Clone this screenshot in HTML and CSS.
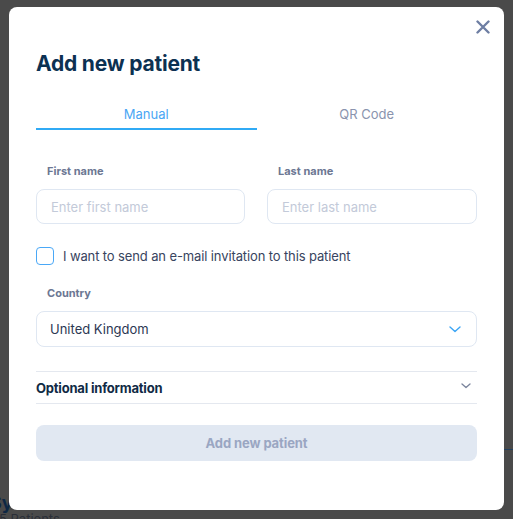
FILE: index.html
```html
<!DOCTYPE html>
<html lang="en">
<head>
<meta charset="utf-8">
<title>Add new patient</title>
<link rel="stylesheet" href="styles.css">
</head>
<body>
<div class="backdrop">
  <div class="bg-title">Sy</div>
  <div class="bg-sub">5 Patients</div>
  <div class="bg-line"></div>
</div>
<div class="modal">
  <button class="close" aria-label="Close">
    <svg width="14" height="14" viewBox="0 0 14 14"><path d="M1.5 1.5L12.5 12.5M12.5 1.5L1.5 12.5" stroke="#6e7ea3" stroke-width="2.4" stroke-linecap="round"/></svg>
  </button>
  <h1 class="title">Add new patient</h1>
  <div class="tabs">
    <div class="tab active">Manual</div>
    <div class="tab">QR Code</div>
  </div>
  <div class="row">
    <div class="field">
      <label class="label">First name</label>
      <div class="input placeholder">Enter first name</div>
    </div>
    <div class="field">
      <label class="label">Last name</label>
      <div class="input placeholder">Enter last name</div>
    </div>
  </div>
  <div class="check">
    <span class="box"></span>
    <span class="check-text">I want to send an e-mail invitation to this patient</span>
  </div>
  <div class="field country">
    <label class="label">Country</label>
    <div class="input select">
      <span>United Kingdom</span>
      <svg width="12" height="7" viewBox="0 0 12 7"><path d="M1 1L6 5.5L11 1" fill="none" stroke="#3ba5f5" stroke-width="1.4" stroke-linecap="round" stroke-linejoin="round"/></svg>
    </div>
  </div>
  <div class="optional">
    <span>Optional information</span>
    <svg width="10" height="6" viewBox="0 0 10 6"><path d="M1 1L5 4.6L9 1" fill="none" stroke="#7a849c" stroke-width="1.3" stroke-linecap="round" stroke-linejoin="round"/></svg>
  </div>
  <button class="submit">Add new patient</button>
</div>
</body>
</html>
```
FILE: styles.css
```css
* { box-sizing: border-box; }
html, body { margin: 0; padding: 0; }
body {
  background: #4a4a4a;
  font-family: Inter, "Noto Sans", sans-serif;
  width: 513px;
  height: 519px;
  overflow: hidden;
  position: relative;
}
.backdrop { position: absolute; inset: 0; }
.bg-title {
  position: absolute;
  left: -10px;
  top: 494px;
  font-size: 18px;
  line-height: 18px;
  font-weight: 700;
  color: #0d2744;
}
.bg-sub {
  position: absolute;
  left: -1px;
  top: 512px;
  font-size: 13px;
  line-height: 14px;
  color: #2a2f38;
}
.bg-line {
  position: absolute;
  left: 504px;
  right: 0;
  top: 449px;
  height: 1px;
  background: #23405e;
}
.modal {
  position: relative;
  margin: 7px 0 0 9px;
  width: 495px;
  height: 503px;
  background: #fff;
  border-radius: 8px;
  padding: 43px 27px 0 27px;
}
.close {
  position: absolute;
  top: 13px;
  right: 14px;
  border: 0;
  background: none;
  padding: 0;
  width: 14px;
  height: 14px;
  display: flex;
}
.title {
  margin: 0;
  font-size: 21px;
  line-height: 28px;
  font-weight: 700;
  color: #0c3152;
  letter-spacing: -0.2px;
}
.tabs {
  display: grid;
  grid-template-columns: 1fr 1fr;
  margin-top: 23px;
}
.tab {
  text-align: center;
  font-size: 13px;
  line-height: 16px;
  padding: 5px 0 6px;
  color: #8a94ae;
  border-bottom: 2px solid transparent;
}
.tab.active {
  color: #4aa6f4;
  border-bottom-color: #30aaf5;
}
.row {
  display: grid;
  grid-template-columns: 209px 210px;
  column-gap: 22px;
  margin-top: 34px;
}
.field { display: flex; flex-direction: column; }
.label {
  font-size: 11px;
  line-height: 14px;
  font-weight: 700;
  color: #6c7793;
  padding-left: 11px;
  margin-bottom: 11px;
}
.input {
  height: 35px;
  border: 1px solid #dfe7f2;
  border-radius: 8px;
  font-size: 13px;
  display: flex;
  align-items: center;
  padding: 0 14px;
}
.placeholder { color: #c3cad9; }
.check {
  display: flex;
  align-items: center;
  gap: 9px;
  margin-top: 23px;
}
.box {
  width: 18px;
  height: 18px;
  border: 1.5px solid #4aa8f7;
  border-radius: 4px;
}
.check-text {
  font-size: 13px;
  letter-spacing: -0.12px;
  color: #384460;
}
.country { margin-top: 21px; }
.select {
  height: 36px;
  justify-content: space-between;
  color: #2c3853;
  padding-left: 13px;
  padding-right: 15px;
}
.optional {
  margin-top: 24px;
  height: 33px;
  border-top: 1px solid #e4e8ef;
  border-bottom: 1px solid #e4e8ef;
  display: flex;
  align-items: center;
  justify-content: space-between;
  font-size: 13px;
  font-weight: 700;
  letter-spacing: -0.2px;
  color: #0f2a45;
  padding-right: 6px;
}
.optional svg { margin-top: -4px; }
.submit {
  display: block;
  width: 100%;
  margin-top: 21px;
  height: 36px;
  border: 0;
  border-radius: 8px;
  background: #e1e8f2;
  color: #9aa6c2;
  font-family: Inter, "Noto Sans", sans-serif;
  font-size: 13px;
  font-weight: 700;
  letter-spacing: -0.1px;
}
```
